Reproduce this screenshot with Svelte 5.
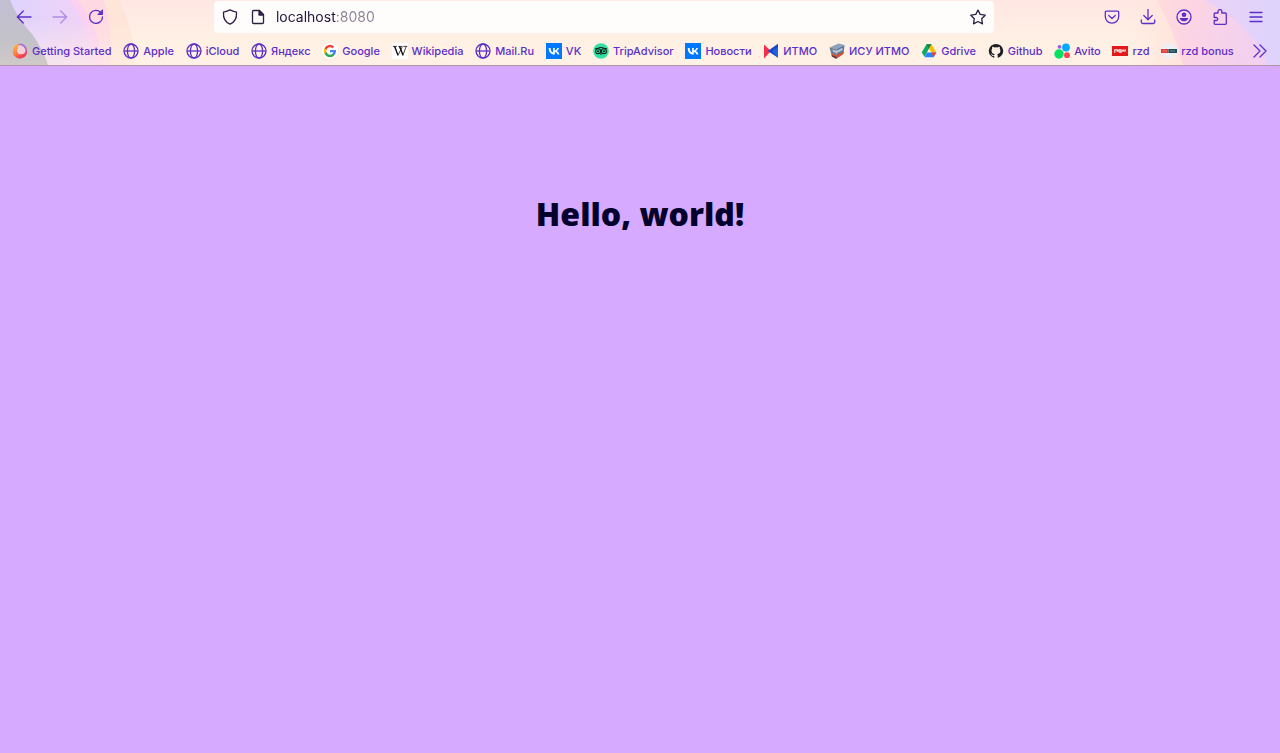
<script>
  let address = $state('localhost:8080');

  const bookmarks = [
    { label: 'Getting Started', icon: 'firefox' },
    { label: 'Apple', icon: 'globe' },
    { label: 'iCloud', icon: 'globe' },
    { label: 'Яндекс', icon: 'globe' },
    { label: 'Google', icon: 'google' },
    { label: 'Wikipedia', icon: 'wikipedia' },
    { label: 'Mail.Ru', icon: 'globe' },
    { label: 'VK', icon: 'vk' },
    { label: 'TripAdvisor', icon: 'tripadvisor' },
    { label: 'Новости', icon: 'vk' },
    { label: 'ИТМО', icon: 'itmo' },
    { label: 'ИСУ ИТМО', icon: 'isu' },
    { label: 'Gdrive', icon: 'drive' },
    { label: 'Github', icon: 'github' },
    { label: 'Avito', icon: 'avito' },
    { label: 'rzd', icon: 'rzd' },
    { label: 'rzd bonus', icon: 'bonus' }
  ];
</script>

{#snippet favicon(name)}
  <svg class="favicon" viewBox="0 0 16 16" aria-hidden="true">
    {#if name === 'firefox'}
      <defs>
        <linearGradient id="fire" x1="0" y1="0.2" x2="0.6" y2="1">
          <stop offset="0" stop-color="#ffb13c" />
          <stop offset="0.5" stop-color="#ff7a3c" />
          <stop offset="1" stop-color="#f5325b" />
        </linearGradient>
      </defs>
      <circle cx="8" cy="8.2" r="7.200" fill="url(#fire)" />
      <circle cx="9.200" cy="6.800" r="4.800" fill="#f3d0dc" />
      <path d="M5.500 1.300C10.800-.5 15.400 3.400 14.600 8c-.4 2.600-2.600 3.800-4.200 3.500 2.800-.8 3.600-3.500 2.500-5.800C11.800 3.300 9 2 5.500 1.300Z" fill="#a56fdc" />
      <path d="M1.200 6C2.200 3 3.600 2.300 4.700 1.600c-.3 1.500.4 2.600 1.600 3.300C4.600 6 4.300 8.400 5.600 10c2 2.400 6.200 2.200 9.500-1.400-.2 4-3.700 6.800-7.300 6.800-4.600 0-7.800-4.400-6.600-9.400Z" fill="url(#fire)" />
    {:else if name === 'globe'}
      <g fill="none" stroke="#5b2fc9" stroke-width="1.300">
        <circle cx="8" cy="8" r="7" />
        <ellipse cx="8" cy="8" rx="3.600" ry="7" />
        <path d="M1 8h14" />
      </g>
    {:else if name === 'google'}
      <circle cx="8" cy="8" r="8" fill="#fff" />
      <path d="M14 8.100c0-.4 0-.8-.1-1.200H8v2.300h3.400c-.2.800-.6 1.400-1.300 1.900v1.500H12c1.300-1.100 2-2.700 2-4.500Z" fill="#4285f4" />
      <path d="M8 14.100c1.700 0 3-.5 4-1.500l-1.900-1.500c-.6.400-1.300.6-2.100.6-1.600 0-3-1.100-3.500-2.600H2.500v1.600c1 2 3 3.400 5.500 3.400Z" fill="#34a853" />
      <path d="M4.500 9.100a3.600 3.600 0 0 1 0-2.300V5.200h-2a6.100 6.100 0 0 0 0 5.500Z" fill="#fbbc05" />
      <path d="M8 4.300c1 0 1.800.3 2.400.9l1.700-1.700A6.100 6.100 0 0 0 2.500 5.200l2 1.600C5 5.400 6.400 4.300 8 4.300Z" fill="#ea4335" />
    {:else if name === 'wikipedia'}
      <rect width="16" height="16" rx="1.500" fill="#fff" />
      <path d="M.8 3.400h4M6.300 3.400h3.800M11.300 3.400h4" stroke="#111" stroke-width=".8" />
      <path d="m2.600 3.600 3.300 8.800 4.500-8.800M7.400 3.600l3.500 8.800 3.200-8.800" fill="none" stroke="#111" stroke-width=".8" />
      <path d="m2 3.600 3.600 9.200.7-1.600-2.900-7.600ZM7 3.600l3.600 9.200.7-1.600-2.900-7.600Z" fill="#111" />
    {:else if name === 'vk'}
      <rect width="16" height="16" fill="#07f" />
      <path d="M8.500 11.500C4.900 11.500 2.800 9 2.700 4.900h1.900c.1 3 1.400 4.200 2.500 4.500V4.900h1.700v2.600c1-.1 2.100-1.300 2.500-2.600H13c-.3 1.500-1.400 2.600-2.200 3.100.8.400 2 1.300 2.600 3.500h-1.900c-.4-1.300-1.400-2.200-2.700-2.400v2.400Z" fill="#fff" />
    {:else if name === 'tripadvisor'}
      <circle cx="8" cy="8" r="7.800" fill="#34e0a1" />
      <g fill="none" stroke="#12251f" stroke-width="1.100">
        <path d="M2.200 5.500h2.300q3.500-2 7 0h2.300" />
        <circle cx="5.100" cy="8.300" r="2.500" />
        <circle cx="10.900" cy="8.300" r="2.500" />
      </g>
      <path d="m6.800 10.500 1.200 1.700 1.200-1.700Z" fill="#12251f" />
      <circle cx="5.100" cy="8.300" r="1.100" fill="#12251f" />
      <circle cx="10.900" cy="8.300" r="1.100" fill="#12251f" />
    {:else if name === 'itmo'}
      <path d="M1 1.500 8 8l-7 7.500Z" fill="#f52f4d" />
      <path d="M15 .8v14L4.800 8Z" fill="#1746c8" />
      <path d="M15 4v10.800L9 8Z" fill="#1b62e6" />
    {:else if name === 'isu'}
      <path d="m.5 4.500 9-4 6 1.500-8 4Z" fill="#8fa3bb" />
      <path d="m.5 4.500 7 1.500v9.500L2.500 12Z" fill="#6b7f98" />
      <path d="m7.500 6 8-4-1 9-7 4.500Z" fill="#5878a4" />
      <path d="m2.500 10 4.500 2.500 7.500-4-.3 2.500-6.700 4.500L3 13Z" fill="#d9502f" />
      <path d="m3.500 6.500 4 1.200 6-3v2.500l-6 3-3.500-1.500Z" fill="#b9c5d2" />
      <path d="m2.500 12 5 2v2L2.800 13.500Z" fill="#50333c" />
    {:else if name === 'drive'}
      <path d="M5.500 1.300h5L6.100 9 3.500 13.700.7 9.500Z" fill="#0da960" />
      <path d="M5.500 1.300h5L8 5.700Z" fill="#188038" />
      <path d="m10.500 1.300 4.800 8.200h-4.800L8 5.600Z" fill="#ffba00" />
      <path d="M5.800 9.500h9.500l-2.800 4.800h-9Z" fill="#2684fc" />
      <path d="M10.500 9.500h4.800l-2.800 4.800Z" fill="#ea4335" />
    {:else if name === 'github'}
      <path fill="#1b1f24" d="M8 1a7 7 0 0 0-2.200 13.700c.3.100.5-.2.500-.4v-1.200c-2 .4-2.400-.9-2.400-.9-.3-.8-.8-1-.8-1-.6-.5.1-.5.1-.5.700.100 1.100.8 1.100.8.6 1.100 1.600.8 2 .6.100-.5.200-.8.400-1-1.600-.2-3.200-.8-3.200-3.500 0-.8.300-1.400.7-1.900-.1-.2-.3-.9.100-1.900 0 0 .6-.2 1.900.7a6.700 6.700 0 0 1 3.500 0c1.300-.9 1.900-.7 1.900-.7.4 1 .2 1.700.1 1.900.5.500.7 1.100.7 1.900 0 2.700-1.600 3.300-3.200 3.500.3.200.5.700.5 1.300v1.900c0 .2.100.5.500.4A7 7 0 0 0 8 1Z" />
    {:else if name === 'avito'}
      <circle cx="5" cy="11" r="4.700" fill="#04e061" />
      <circle cx="12" cy="4.500" r="3.900" fill="#00aaff" />
      <circle cx="13" cy="12.200" r="2.900" fill="#ff4053" />
      <circle cx="5.500" cy="3.800" r="1.900" fill="#965eeb" />
    {:else if name === 'rzd'}
      <rect y="3" width="16" height="10" fill="#e21a1a" />
      <path d="M2.800 9.800V6.700h2.400v2M5.200 7.700h1.800M7 9.200V6.800h2v2.400H7M9 8h4.200V6.300M11.100 6.300v1.500" fill="none" stroke="#fff" stroke-width="1.100" />
    {:else}
      <circle cx="8" cy="8" r="7.800" fill="#eeeef3" />
      <path d="M0 6h7.500v4H0Z" fill="#df3a35" />
      <path d="M7.500 6H16v4H7.500Z" fill="#15505d" />
      <path d="M1.500 8h4.500M9 8h5" stroke="#fff" stroke-width=".7" opacity=".5" />
    {/if}
  </svg>
{/snippet}

<div class="browser">
  <header>
    <svg class="art left" viewBox="0 0 150 65" aria-hidden="true">
      <defs>
        <linearGradient id="shade" x1="0" x2="0" y1="0" y2="1">
          <stop offset="0" stop-color="#c2bfd2" />
          <stop offset=".6" stop-color="#c3c2c9" />
          <stop offset="1" stop-color="#d0c9c8" />
        </linearGradient>
        <linearGradient id="lilac" x1="0" x2="1" y1="0" y2="0">
          <stop offset="0" stop-color="#dcd3ff" />
          <stop offset="1" stop-color="#f3d2f5" />
        </linearGradient>
        <linearGradient id="fade" x1="0" x2="0" y1="0" y2="1">
          <stop offset=".3" stop-color="#fff0e6" stop-opacity="0" />
          <stop offset="1" stop-color="#fff0e6" stop-opacity=".65" />
        </linearGradient>
      </defs>
      <path d="M0 0h119q14 25 16 65H0Z" fill="#ffe5d8" />
      <path d="M0 0h104q8 30 7 65H0Z" fill="#ffd9e2" />
      <path d="M0 0h77q20 25 27 65H0Z" fill="#fbd0f0" />
      <path d="M0 0h70q20 28 24 65H0Z" fill="url(#lilac)" />
      <path d="M0 0h135v65H0Z" fill="url(#fade)" />
      <path d="M0 0h10q7 18 22 34 12 17 16 31H0Z" fill="url(#shade)" />
    </svg>
    <svg class="art right" viewBox="0 0 150 65" aria-hidden="true">
      <defs>
        <linearGradient id="peach" x1="0" x2="1" y1="0" y2="0">
          <stop offset="0" stop-color="#ffe4dc" stop-opacity="0" />
          <stop offset=".35" stop-color="#ffe4dc" />
        </linearGradient>
        <linearGradient id="pink" gradientUnits="userSpaceOnUse" x1="27" x2="120" y1="0" y2="20">
          <stop offset="0" stop-color="#ffdcdc" />
          <stop offset=".4" stop-color="#fcd4e4" />
          <stop offset="1" stop-color="#f3d1ee" />
        </linearGradient>
        <linearGradient id="violet" gradientUnits="userSpaceOnUse" x1="74" x2="150" y1="0" y2="0">
          <stop offset="0" stop-color="#ead2f6" />
          <stop offset="1" stop-color="#ded3fc" />
        </linearGradient>
      </defs>
      <path d="M0 0h150v65H0Z" fill="url(#peach)" />
      <path d="M27 0h123v65H53Q44 30 27 0Z" fill="url(#pink)" />
      <path d="M74 0h76v65h-13Q126 28 74 0Z" fill="url(#violet)" />
    </svg>

    <nav class="toolbar" aria-label="Navigation">
      <div class="group">
        <button aria-label="Back"><svg viewBox="0 0 16 16"><path d="M15 8H1.500M7.300 2 1.300 8l6 6" /></svg></button>
        <button class="dim" disabled aria-label="Forward"><svg viewBox="0 0 16 16"><path d="M1 8h13.500M8.700 2l6 6-6 6" /></svg></button>
        <button aria-label="Reload"><svg viewBox="0 0 16 16"><path d="M12.800 3.500A6.500 6.500 0 1 0 14.500 8" /><path d="M14.500 1.200v4.300h-4.300Z" fill="#5b2fc9" stroke-width="1" /></svg></button>
      </div>
      <span class="spacer"></span>
      <div class="urlbar">
        <svg viewBox="0 0 16 16" aria-hidden="true"><path d="M8 .9c2 1.100 4.200 1.800 6.500 2.300.4 5-1.500 9.800-6.500 12-5-2.200-6.900-7-6.500-12C3.800 2.700 6 2 8 .9Z" /></svg>
        <svg viewBox="0 0 16 16" aria-hidden="true"><path d="M3.500 1.500h6l4 4v8a1 1 0 0 1-1 1h-9a1 1 0 0 1-1-1v-11a1 1 0 0 1 1-1Z" /><path d="M9 1.500V6h4.500Z" fill="#2d2046" /></svg>
        <input aria-label="Address" bind:value={address} spellcheck="false" />
        <button class="star" aria-label="Bookmark this page"><svg viewBox="0 0 16 16"><path d="m8 1 2.200 4.400 5 .8-3.500 3.600.8 5L8 12.500l-4.500 2.300.8-5L.8 6.200l5-.8Z" /></svg></button>
      </div>
      <span class="spacer"></span>
      <div class="group">
        <button aria-label="Save to Pocket"><svg viewBox="0 0 16 16"><path d="M2.500 2.200h11a1.200 1.200 0 0 1 1.200 1.200V7.500a6.700 6.700 0 0 1-13.400 0V3.400a1.200 1.200 0 0 1 1.200-1.200Z" /><path d="m4.700 6.500 3.300 3 3.300-3" /></svg></button>
        <button aria-label="Downloads"><svg viewBox="0 0 16 16"><path d="M8 0v10.500M3.800 6.500 8 10.700l4.200-4.200M1.300 11v2a1.500 1.500 0 0 0 1.500 1.500h10.400a1.500 1.500 0 0 0 1.500-1.500v-2" /></svg></button>
        <button aria-label="Account"><svg viewBox="0 0 16 16"><circle cx="8" cy="8" r="7" /><circle cx="8" cy="5.800" r="2.300" fill="#5b2fc9" stroke="none" /><path d="M3.700 9h8.600a4.500 4.500 0 0 1-8.600 0Z" fill="#5b2fc9" stroke="none" /></svg></button>
        <button aria-label="Extensions"><svg viewBox="0 0 16 16"><path d="M6 4V2.500a1.900 1.900 0 0 1 3.800 0V4h3.500a1 1 0 0 1 1 1v9.300a1 1 0 0 1-1 1H3.200a1 1 0 0 1-1-1v-2.800h2a1.500 1.500 0 0 0 0-3h-2V5a1 1 0 0 1 1-1Z" /></svg></button>
        <button aria-label="Menu"><svg viewBox="0 0 16 16"><path d="M2 3.500h12M2 8h12M2 12.500h12" /></svg></button>
      </div>
    </nav>

    <nav class="bookmarks" aria-label="Bookmarks">
      <ul>
        {#each bookmarks as item}
          <li><a href="#top">{@render favicon(item.icon)}<span>{item.label}</span></a></li>
        {/each}
      </ul>
      <button aria-label="More bookmarks"><svg viewBox="0 0 16 16"><path d="m2 2 6 6-6 6M8 2l6 6-6 6" /></svg></button>
    </nav>
  </header>

  <main>
    <h1>Hello, world!</h1>
  </main>
</div>

<style>
  :global(body) {
    background: #d6aaff;
  }

  .browser {
    min-height: 100vh;
    background: #d6aaff;
    font-family: Inter, "Liberation Sans", sans-serif;
  }

  header {
    position: relative;
    overflow: hidden;
    background: linear-gradient(#ffe7e3, #fff0e4 60%, #fff1e5);
    border-bottom: 1px solid #b592a8;
  }

  .art {
    position: absolute;
    top: 0;
    height: 100%;
  }

  .left {
    left: 0;
  }

  .right {
    right: 0;
  }

  button {
    display: grid;
    place-items: center;
    width: 32px;
    height: 32px;
    padding: 0;
    border: 0;
    background: none;
  }

  .dim {
    opacity: 0.42;
  }

  .toolbar svg,
  .bookmarks button svg {
    display: block;
    flex: none;
    width: 16px;
    height: 16px;
    fill: none;
    stroke: #5b2fc9;
    stroke-width: 1.3;
    stroke-linecap: round;
    stroke-linejoin: round;
  }

  .toolbar {
    position: relative;
    display: flex;
    align-items: center;
    height: 34px;
    padding: 0 8px;
  }

  .group {
    display: flex;
    gap: 4px;
  }

  .spacer {
    flex: 102 1 0;
  }

  .urlbar {
    flex: 773 1 0;
    display: flex;
    align-items: center;
    gap: 12px;
    min-width: 0;
    height: 32px;
    padding-left: 8px;
    border-radius: 4px;
    background: #fffcfc;
    box-sizing: border-box;
  }

  .toolbar .urlbar svg {
    stroke: #2d2046;
  }

  input {
    flex: 1;
    min-width: 0;
    height: 24px;
    padding: 0;
    margin-left: -2px;
    border: 0;
    outline: 0;
    font: 14px/24px Inter, "Liberation Sans", sans-serif;
    color: transparent;
    caret-color: #211538;
    background: linear-gradient(90deg, #211538 60px, #8b8296 60px);
    background-clip: text;
  }

  .bookmarks {
    position: relative;
    display: flex;
    align-items: center;
    gap: 10px;
    height: 28px;
    padding: 3px 4px 0 12px;
  }

  ul {
    flex: 1;
    display: flex;
    justify-content: space-between;
    min-width: 0;
    margin: 0;
    padding: 0;
    overflow: hidden;
    list-style: none;
  }

  a {
    display: flex;
    align-items: center;
    gap: 4px;
    color: #5b2fc9;
    font-size: 11px;
    font-weight: 500;
    line-height: 16px;
    text-decoration: none;
    white-space: nowrap;
  }

  .favicon {
    flex: none;
    width: 16px;
    height: 16px;
  }

  main {
    padding: 128px 24px;
    text-align: center;
  }

  h1 {
    margin: 0;
    color: #03002e;
    font: 800 32px/40px "Open Sans", Lato, sans-serif;
  }
</style>
